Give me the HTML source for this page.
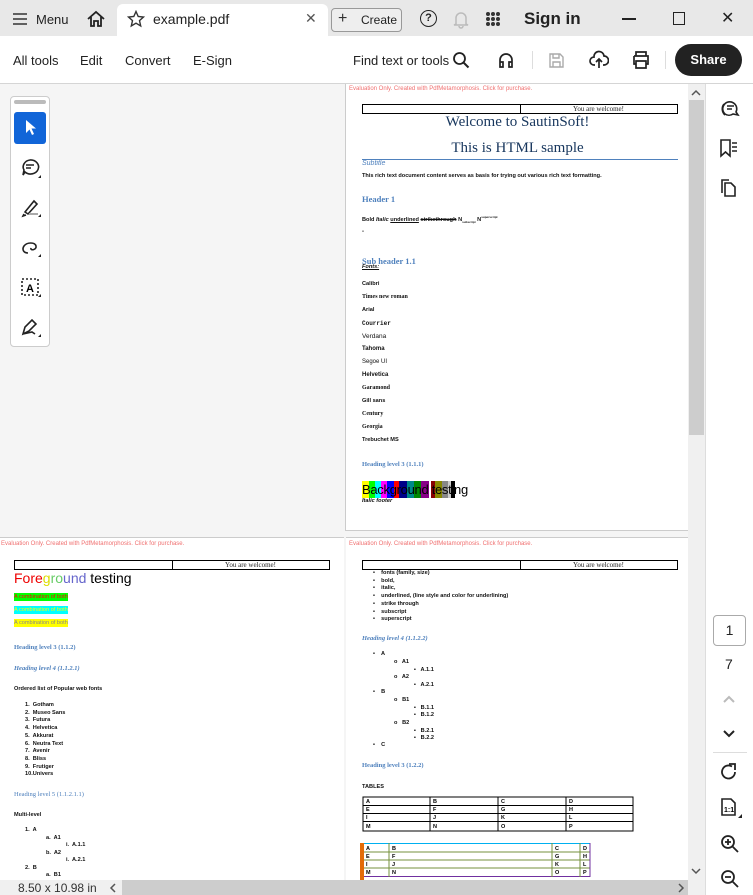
<!DOCTYPE html>
<html><head><meta charset="utf-8"><style>
*{margin:0;padding:0;box-sizing:border-box}
body{width:753px;height:895px;position:relative;overflow:hidden;font-family:"Liberation Sans",sans-serif;background:#f5f5f5;color:#222}
.a{position:absolute;white-space:nowrap}
.pg{position:absolute;background:#fff;overflow:hidden}
.t{font-size:6px;font-weight:bold;color:#111}
.wm{font-size:6px;color:#f07070}
.h{font-family:"Liberation Serif",serif;color:#4f81bd;font-weight:bold;font-size:7px}
.tbl{position:absolute;border:1px solid #000;height:10px}
.tbl div{position:absolute;top:0;bottom:0;border-left:1px solid #000}
.tbl span{position:absolute;font-size:7px;font-family:"Liberation Serif",serif;top:0;line-height:9px}
svg{position:absolute}
</style></head><body>
<!-- tab bar -->
<div class="a" style="left:0;top:0;width:753px;height:36px;background:#e8e8e8"></div>
<div class="a" style="left:117px;top:4px;width:211px;height:32px;background:#fff;border-radius:6px 6px 0 0"></div>
<svg style="left:12px;top:12px" width="16" height="14"><path d="M1 2H15M1 7H15M1 12H15" stroke="#333" stroke-width="1.6"/></svg>
<div class="a" style="left:36px;top:12px;font-size:13px">Menu</div>
<svg style="left:86px;top:10px" width="20" height="18"><path d="M2 9L10 2L18 9M5 7V16H8V11H12V16H15V7" fill="none" stroke="#222" stroke-width="1.8"/></svg>
<svg style="left:127px;top:10px" width="18" height="18"><path d="M9 1.5L11.2 6.5L16.5 7L12.5 10.6L13.7 16L9 13.2L4.3 16L5.5 10.6L1.5 7L6.8 6.5Z" fill="none" stroke="#333" stroke-width="1.4"/></svg>
<div class="a" style="left:153px;top:11px;font-size:14px;color:#222">example.pdf</div>
<div class="a" style="left:305px;top:10px;font-size:14px;color:#555">✕</div>
<div class="a" style="left:331px;top:8px;width:71px;height:24px;border:1px solid #999;border-radius:4px;background:#eee"></div>
<div class="a" style="left:338px;top:10px;font-size:16px;color:#333">+</div>
<div class="a" style="left:361px;top:13px;font-size:12px;color:#222">Create</div>
<div class="a" style="left:420px;top:10px;width:17px;height:17px;border:1.8px solid #222;border-radius:50%;font-size:11px;font-weight:bold;text-align:center;line-height:14px">?</div>
<svg style="left:452px;top:10px" width="18" height="19"><path d="M4 14V8A5 5 0 0 1 14 8V14L16 15H2ZM7 16A2 2 0 0 0 11 16" fill="none" stroke="#bbb" stroke-width="1.5"/></svg>
<svg style="left:485px;top:11px" width="16" height="16"><g fill="#333"><circle cx="3" cy="3" r="2"/><circle cx="8" cy="3" r="2"/><circle cx="13" cy="3" r="2"/><circle cx="3" cy="8" r="2"/><circle cx="8" cy="8" r="2"/><circle cx="13" cy="8" r="2"/><circle cx="3" cy="13" r="2"/><circle cx="8" cy="13" r="2"/><circle cx="13" cy="13" r="2"/></g></svg>
<div class="a" style="left:524px;top:9px;font-size:17px;font-weight:bold;color:#222">Sign in</div>
<div class="a" style="left:622px;top:18px;width:14px;height:2px;background:#222"></div>
<div class="a" style="left:673px;top:12px;width:12px;height:13px;border:1.5px solid #222"></div>
<div class="a" style="left:721px;top:8px;font-size:16px;color:#222">✕</div>
<!-- toolbar -->
<div class="a" style="left:0;top:36px;width:753px;height:48px;background:#fff;border-bottom:1px solid #d5d5d5"></div>
<div class="a" style="left:13px;top:53px;font-size:13px">All tools</div>
<div class="a" style="left:80px;top:53px;font-size:13px">Edit</div>
<div class="a" style="left:125px;top:53px;font-size:13px">Convert</div>
<div class="a" style="left:193px;top:53px;font-size:13px">E-Sign</div>
<div class="a" style="left:353px;top:53px;font-size:13px">Find text or tools</div>
<svg style="left:452px;top:51px" width="18" height="18"><circle cx="7.5" cy="7.5" r="5.5" fill="none" stroke="#222" stroke-width="1.8"/><path d="M11.5 11.5L16.5 16.5" stroke="#222" stroke-width="2"/></svg>
<svg style="left:497px;top:51px" width="18" height="18"><path d="M3 14V9A6 6 0 0 1 15 9V14M3 11H6V16H3ZM12 11H15V16H12Z" fill="none" stroke="#222" stroke-width="1.7"/></svg>
<div class="a" style="left:532px;top:51px;width:1px;height:18px;background:#ddd"></div>
<svg style="left:548px;top:52px" width="17" height="17"><path d="M2 2H12L15 5V15H2ZM5 2V6H11V2M5 15V10H12V15" fill="none" stroke="#aaa" stroke-width="1.4"/></svg>
<svg style="left:589px;top:50px" width="20" height="20"><path d="M6 15H5A4 4 0 0 1 5 7A5 5 0 0 1 15 6A4 4 0 0 1 15 15H14M10 18V9M7 12L10 9L13 12" fill="none" stroke="#222" stroke-width="1.7"/></svg>
<svg style="left:631px;top:51px" width="20" height="18"><path d="M5 5V1H15V5M3 5H17V13H15M5 13H3V5M5 10H15V17H5Z" fill="none" stroke="#222" stroke-width="1.7"/></svg>
<div class="a" style="left:665px;top:51px;width:1px;height:18px;background:#ddd"></div>
<div class="a" style="left:675px;top:44px;width:67px;height:32px;border-radius:16px;background:#222;color:#fff;font-size:13px;font-weight:bold;text-align:center;line-height:32px">Share</div>
<!-- left tool palette -->
<div class="a" style="left:10px;top:96px;width:40px;height:251px;border:1px solid #ccc;border-radius:4px;background:#fff"></div>
<div class="a" style="left:14px;top:100px;width:32px;height:4px;border-radius:2px;background:#bbb"></div>
<div class="a" style="left:14px;top:112px;width:32px;height:32px;border-radius:3px;background:#1165d8"></div>
<svg style="left:24px;top:119px" width="14" height="18"><path d="M2 1V14L5.5 10.5L8 16L10 15L7.5 9.5H12Z" fill="#fff"/></svg>
<svg style="left:20px;top:158px" width="22" height="22"><path d="M10 2A8 7 0 1 1 5 14L3 17L4 12A8 7 0 0 1 10 2ZM6 7H14M6 10H11" fill="none" stroke="#222" stroke-width="1.6"/><path d="M18 20H21V17Z" fill="#222"/></svg>
<svg style="left:20px;top:197px" width="22" height="22"><path d="M5 15L14 4L17 7L8 17ZM4 17L3 19L6 18" fill="none" stroke="#222" stroke-width="1.6"/><path d="M9 17H18" stroke="#aaa" stroke-width="2"/><path d="M18 20H21V17Z" fill="#222"/></svg>
<svg style="left:20px;top:237px" width="22" height="22"><path d="M8 16C3 16 2 12 4 9C7 5 15 5 16 9C17 13 10 14 11 11" fill="none" stroke="#222" stroke-width="1.6"/><path d="M18 20H21V17Z" fill="#222"/></svg>
<svg style="left:20px;top:277px" width="22" height="22"><rect x="2" y="2" width="16" height="16" fill="none" stroke="#222" stroke-width="1.6" stroke-dasharray="2 2"/><text x="6" y="15" font-size="11" font-family="Liberation Sans" font-weight="bold">A</text><path d="M18 20H21V17Z" fill="#222"/></svg>
<svg style="left:20px;top:317px" width="22" height="22"><path d="M3 17L5 10L12 3L16 7L9 14ZM3 17L12 15L15 17" fill="none" stroke="#222" stroke-width="1.6"/><path d="M18 20H21V17Z" fill="#222"/></svg>
<!-- page 1 -->
<div class="pg" style="left:345px;top:84px;width:343px;height:447px;border-bottom:1px solid #ccc;border-left:1px solid #ccc">
<div class="a wm" style="left:3px;top:2px">Evaluation Only. Created with PdfMetamorphosis. Click for purchase.</div>
<div class="tbl" style="left:16px;top:20px;width:316px"><div style="left:157px"></div><span style="left:210px">You are welcome!</span></div>
<div class="a" style="left:0;width:343px;text-align:center;top:30px;font-family:'Liberation Serif',serif;font-size:15px;color:#17365d">Welcome to SautinSoft!</div>
<div class="a" style="left:0;width:343px;text-align:center;top:56px;font-family:'Liberation Serif',serif;font-size:15px;color:#17365d">This is HTML sample</div>
<div class="a" style="left:16px;top:75px;width:316px;height:1px;background:#4f81bd"></div>
<div class="a" style="left:16px;top:76px;font-size:7px;font-style:italic;color:#4f81bd">Subtitle</div>
<div class="a t" style="left:16px;top:89px;font-size:5.6px">This rich text document content serves as basis for trying out various rich text formatting.</div>
<div class="a h" style="left:16px;top:110px;font-size:8.5px">Header 1</div>
<div class="a t" style="left:16px;top:131px;font-size:5.6px">Bold <i>Italic</i> <u>underlined</u> <s>strikethrough</s> N<sub style="font-size:3px">subscript</sub> N<sup style="font-size:3px">superscript</sup></div>
<div class="a t" style="left:16px;top:145px">-</div>
<div class="a h" style="left:16px;top:172px;font-size:8.5px">Sub header 1.1</div>
<div class="a t" style="left:16px;top:180px;font-style:italic;text-decoration:underline;font-size:5.6px">Fonts:</div>
<div class="a t" style="left:16px;top:197px;font-size:5.6px">Calibri</div>
<div class="a t" style="left:16px;top:210px;font-size:6px;font-family:'Liberation Serif',serif">Times new roman</div>
<div class="a t" style="left:16px;top:223px;font-size:5.6px">Arial</div>
<div class="a t" style="left:16px;top:236px;font-size:6px;font-family:'Liberation Mono',monospace">Courrier</div>
<div class="a t" style="left:16px;top:249px;font-size:6.5px;font-weight:normal">Verdana</div>
<div class="a t" style="left:16px;top:262px;font-size:6px">Tahoma</div>
<div class="a t" style="left:16px;top:275px;font-size:6px;font-weight:normal">Segoe UI</div>
<div class="a t" style="left:16px;top:288px;font-size:6px">Helvetica</div>
<div class="a t" style="left:16px;top:301px;font-size:6px;font-family:'Liberation Serif',serif">Garamond</div>
<div class="a t" style="left:16px;top:314px;font-size:5.6px">Gill sans</div>
<div class="a t" style="left:16px;top:327px;font-size:6px;font-family:'Liberation Serif',serif">Century</div>
<div class="a t" style="left:16px;top:340px;font-size:6px;font-family:'Liberation Serif',serif">Georgia</div>
<div class="a t" style="left:16px;top:353px;font-size:5.6px">Trebuchet MS</div>
<div class="a h" style="left:16px;top:377px;font-size:6.5px">Heading level 3 (1.1.1)</div>
<div class="a" style="left:16px;top:397px;height:17px;display:flex">
<span style="width:7px;background:#ff0"></span><span style="width:6px;background:#0f0"></span><span style="width:6px;background:#0ff"></span><span style="width:6px;background:#f0f"></span><span style="width:7px;background:#00f"></span><span style="width:5px;background:#f00"></span><span style="width:8px;background:#008"></span><span style="width:7px;background:#088"></span><span style="width:7px;background:#080"></span><span style="width:8px;background:#808"></span><span style="width:2px"></span><span style="width:4px;background:#800"></span><span style="width:7px;background:#880"></span><span style="width:6px;background:#888"></span><span style="width:3px;background:#ccc"></span><span style="width:4px;background:#000"></span></div>
<div class="a" style="left:16px;top:398px;font-size:13px;color:#000;letter-spacing:-0.3px">Background testing</div>
<div class="a t" style="left:16px;top:414px;font-size:5.6px;font-style:italic">Italic footer</div>
</div>
<!-- page 2 left -->
<div class="pg" style="left:0;top:537px;width:344px;height:343px;border-top:1px solid #ccc">
<div class="a wm" style="left:1px;top:3px">Evaluation Only. Created with PdfMetamorphosis. Click for purchase.</div>
<div class="tbl" style="left:14px;top:22px;width:316px"><div style="left:157px"></div><span style="left:210px">You are welcome!</span></div>
<div class="a" style="left:14px;top:32px;font-size:14px;color:#000"><span style="color:#e00">Fore</span><span style="color:#dd0">g</span><span style="color:#6c6">ro</span><span style="color:#66c">und</span> testing</div>
<div class="a" style="left:14px;top:55px;font-size:5.6px;background:#0f0;color:#f00;padding:1px 0">A combination of both</div>
<div class="a" style="left:14px;top:68px;font-size:5.6px;background:#0ff;color:#ff0;padding:1px 0">A combination of both</div>
<div class="a" style="left:14px;top:81px;font-size:5.6px;background:#ff0;color:#888;padding:1px 0">A combination of both</div>
<div class="a h" style="left:14px;top:106px;font-size:6.5px">Heading level 3 (1.1.2)</div>
<div class="a h" style="left:14px;top:127px;font-size:6.5px;font-style:italic">Heading level 4 (1.1.2.1)</div>
<div class="a t" style="left:14px;top:148px;font-size:5.6px">Ordered list of Popular web fonts</div>
<div class="a t" style="left:25px;top:164px;font-size:5.6px;line-height:7.7px">1.&nbsp; Gotham<br>2.&nbsp; Museo Sans<br>3.&nbsp; Futura<br>4.&nbsp; Helvetica<br>5.&nbsp; Akkurat<br>6.&nbsp; Neutra Text<br>7.&nbsp; Avenir<br>8.&nbsp; Bliss<br>9.&nbsp; Frutiger<br>10.Univers</div>
<div class="a h" style="left:14px;top:253px;font-size:6.5px;font-weight:normal">Heading level 5 (1.1.2.1.1)</div>
<div class="a t" style="left:14px;top:274px;font-size:5.6px">Multi-level</div>
<div class="a t" style="left:25px;top:289px;font-size:5.6px">1.&nbsp; A</div>
<div class="a t" style="left:46px;top:297px;font-size:5.6px">a.&nbsp; A1</div>
<div class="a t" style="left:66px;top:304px;font-size:5.6px">i.&nbsp; A.1.1</div>
<div class="a t" style="left:46px;top:312px;font-size:5.6px">b.&nbsp; A2</div>
<div class="a t" style="left:66px;top:319px;font-size:5.6px">i.&nbsp; A.2.1</div>
<div class="a t" style="left:25px;top:327px;font-size:5.6px">2.&nbsp; B</div>
<div class="a t" style="left:46px;top:334px;font-size:5.6px">a.&nbsp; B1</div>
</div>
<!-- page 2 right -->
<div class="pg" style="left:346px;top:537px;width:342px;height:343px;border-top:1px solid #ccc">
<div class="a wm" style="left:3px;top:3px">Evaluation Only. Created with PdfMetamorphosis. Click for purchase.</div>
<div class="tbl" style="left:16px;top:22px;width:316px"><div style="left:157px"></div><span style="left:210px">You are welcome!</span></div>
<div class="a t" style="left:27px;top:32px;font-size:5.6px;line-height:7.7px">•&nbsp;&nbsp;&nbsp; fonts (family, size)<br>•&nbsp;&nbsp;&nbsp; bold,<br>•&nbsp;&nbsp;&nbsp; italic,<br>•&nbsp;&nbsp;&nbsp; underlined, (line style and color for underlining)<br>•&nbsp;&nbsp;&nbsp; strike through<br>•&nbsp;&nbsp;&nbsp; subscript<br>•&nbsp;&nbsp;&nbsp; superscript</div>
<div class="a h" style="left:16px;top:97px;font-size:6.5px;font-style:italic">Heading level 4 (1.1.2.2)</div>
<div class="a t" style="left:27px;top:113px;font-size:5.6px">•&nbsp;&nbsp;&nbsp; A</div>
<div class="a t" style="left:48px;top:121px;font-size:5.6px">o&nbsp;&nbsp; A1</div>
<div class="a t" style="left:68px;top:129px;font-size:5.6px">▪&nbsp;&nbsp; A.1.1</div>
<div class="a t" style="left:48px;top:136px;font-size:5.6px">o&nbsp;&nbsp; A2</div>
<div class="a t" style="left:68px;top:144px;font-size:5.6px">▪&nbsp;&nbsp; A.2.1</div>
<div class="a t" style="left:27px;top:151px;font-size:5.6px">•&nbsp;&nbsp;&nbsp; B</div>
<div class="a t" style="left:48px;top:159px;font-size:5.6px">o&nbsp;&nbsp; B1</div>
<div class="a t" style="left:68px;top:167px;font-size:5.6px">▪&nbsp;&nbsp; B.1.1</div>
<div class="a t" style="left:68px;top:174px;font-size:5.6px">▪&nbsp;&nbsp; B.1.2</div>
<div class="a t" style="left:48px;top:182px;font-size:5.6px">o&nbsp;&nbsp; B2</div>
<div class="a t" style="left:68px;top:190px;font-size:5.6px">▪&nbsp;&nbsp; B.2.1</div>
<div class="a t" style="left:68px;top:197px;font-size:5.6px">▪&nbsp;&nbsp; B.2.2</div>
<div class="a t" style="left:27px;top:204px;font-size:5.6px">•&nbsp;&nbsp;&nbsp; C</div>
<div class="a h" style="left:16px;top:224px;font-size:6.5px">Heading level 3 (1.2.2)</div>
<div class="a t" style="left:16px;top:246px;font-size:5.6px">TABLES</div>
<svg style="left:16px;top:258px" width="272" height="37"><g fill="none" stroke="#000" stroke-width="1"><rect x="1" y="1" width="270" height="34"/><path d="M1 9.5H271M1 17.5H271M1 25.5H271M68 1V35M136 1V35M204 1V35"/></g>
<g font-size="5.5" font-weight="bold" font-family="Liberation Sans"><text x="4" y="7">A</text><text x="71" y="7">B</text><text x="139" y="7">C</text><text x="207" y="7">D</text><text x="4" y="15">E</text><text x="71" y="15">F</text><text x="139" y="15">G</text><text x="207" y="15">H</text><text x="4" y="23">I</text><text x="71" y="23">J</text><text x="139" y="23">K</text><text x="207" y="23">L</text><text x="4" y="32">M</text><text x="71" y="32">N</text><text x="139" y="32">O</text><text x="207" y="32">P</text></g></svg>
<svg style="left:14px;top:305px" width="232" height="38"><rect x="0" y="0" width="4" height="38" fill="#e36c09"/><g fill="none" stroke-width="1"><path d="M4 0.5H230" stroke="#00b0f0"/><path d="M4 9H230M4 17H230M4 25H230" stroke="#76923c"/><path d="M4 33.5H230M230 0V34" stroke="#7030a0"/><path d="M29 0V34M192 0V34M220 0V34" stroke="#76923c"/></g>
<g font-size="5.5" font-weight="bold" font-family="Liberation Sans"><text x="6" y="7">A</text><text x="32" y="7">B</text><text x="195" y="7">C</text><text x="223" y="7">D</text><text x="6" y="15">E</text><text x="32" y="15">F</text><text x="195" y="15">G</text><text x="223" y="15">H</text><text x="6" y="23">I</text><text x="32" y="23">J</text><text x="195" y="23">K</text><text x="223" y="23">L</text><text x="6" y="31">M</text><text x="32" y="31">N</text><text x="195" y="31">O</text><text x="223" y="31">P</text></g></svg>
</div>
<!-- vertical scrollbar -->
<div class="a" style="left:688px;top:84px;width:17px;height:796px;background:#f0f0f0"></div>
<div class="a" style="left:689px;top:100px;width:15px;height:335px;background:#cdcdcd"></div>
<svg style="left:691px;top:89px" width="10" height="8"><path d="M1 6L5 2L9 6" fill="none" stroke="#555" stroke-width="1.5"/></svg>
<svg style="left:691px;top:867px" width="10" height="8"><path d="M1 2L5 6L9 2" fill="none" stroke="#555" stroke-width="1.5"/></svg>
<!-- horizontal scrollbar -->
<div class="a" style="left:0;top:880px;width:705px;height:15px;background:#cdcdcd"></div>
<div class="a" style="left:0;top:880px;width:122px;height:15px;background:#f0f0f0"></div>
<div class="a" style="left:18px;top:881px;font-size:12px;color:#333">8.50 x 10.98 in</div>
<svg style="left:109px;top:883px" width="8" height="10"><path d="M6 1L2 5L6 9" fill="none" stroke="#555" stroke-width="1.5"/></svg>
<div class="a" style="left:688px;top:880px;width:17px;height:15px;background:#f0f0f0"></div>
<svg style="left:677px;top:883px" width="8" height="10"><path d="M2 1L6 5L2 9" fill="none" stroke="#555" stroke-width="1.5"/></svg>
<!-- right panel -->
<div class="a" style="left:705px;top:84px;width:48px;height:811px;background:#fff;border-left:1px solid #ddd"></div>
<svg style="left:719px;top:98px" width="22" height="20"><path d="M6 16A7 7 0 1 1 17 14L19 17L14 16A7 7 0 0 1 6 16Z M8 8H15M8 11H13" fill="none" stroke="#222" stroke-width="1.6"/><path d="M5 6A8 8 0 0 0 6 17" fill="none" stroke="#222" stroke-width="1.6"/></svg>
<svg style="left:719px;top:138px" width="20" height="20"><path d="M2 2H11V18L6.5 14L2 18Z" fill="none" stroke="#222" stroke-width="1.6"/><path d="M13 5H18M13 9H18M13 13H18" stroke="#222" stroke-width="1.4"/></svg>
<svg style="left:719px;top:178px" width="20" height="20"><path d="M6 5H12L16 9V18H6Z" fill="none" stroke="#222" stroke-width="1.6"/><path d="M3 15V2H10" fill="none" stroke="#222" stroke-width="1.6"/></svg>
<div class="a" style="left:713px;top:615px;width:33px;height:31px;border:1px solid #aaa;border-radius:4px;text-align:center;line-height:29px;font-size:14px;color:#222">1</div>
<div class="a" style="left:725px;top:656px;font-size:14px;color:#222">7</div>
<svg style="left:722px;top:694px" width="14" height="10"><path d="M2 8L7 3L12 8" fill="none" stroke="#bbb" stroke-width="2"/></svg>
<svg style="left:722px;top:729px" width="14" height="10"><path d="M2 2L7 7L12 2" fill="none" stroke="#222" stroke-width="2"/></svg>
<div class="a" style="left:713px;top:752px;width:34px;height:1px;background:#ddd"></div>
<svg style="left:719px;top:762px" width="20" height="20"><path d="M16 10A6.5 6.5 0 1 1 13 4.5" fill="none" stroke="#222" stroke-width="1.8"/><path d="M10 2H16V8" fill="none" stroke="#222" stroke-width="1.8"/></svg>
<svg style="left:719px;top:797px" width="24" height="22"><path d="M3 2H12L16 6V18H3Z" fill="none" stroke="#222" stroke-width="1.6"/><text x="5" y="15" font-size="7" font-family="Liberation Sans" font-weight="bold">1:1</text><path d="M19 21H23V17Z" fill="#222"/></svg>
<svg style="left:720px;top:834px" width="20" height="20"><circle cx="8" cy="8" r="6" fill="none" stroke="#222" stroke-width="1.8"/><path d="M12.5 12.5L18 18M5 8H11M8 5V11" stroke="#222" stroke-width="1.8"/></svg>
<svg style="left:720px;top:869px" width="20" height="20"><circle cx="8" cy="8" r="6" fill="none" stroke="#222" stroke-width="1.8"/><path d="M12.5 12.5L18 18M5 8H11" stroke="#222" stroke-width="1.8"/></svg>
</body></html>
